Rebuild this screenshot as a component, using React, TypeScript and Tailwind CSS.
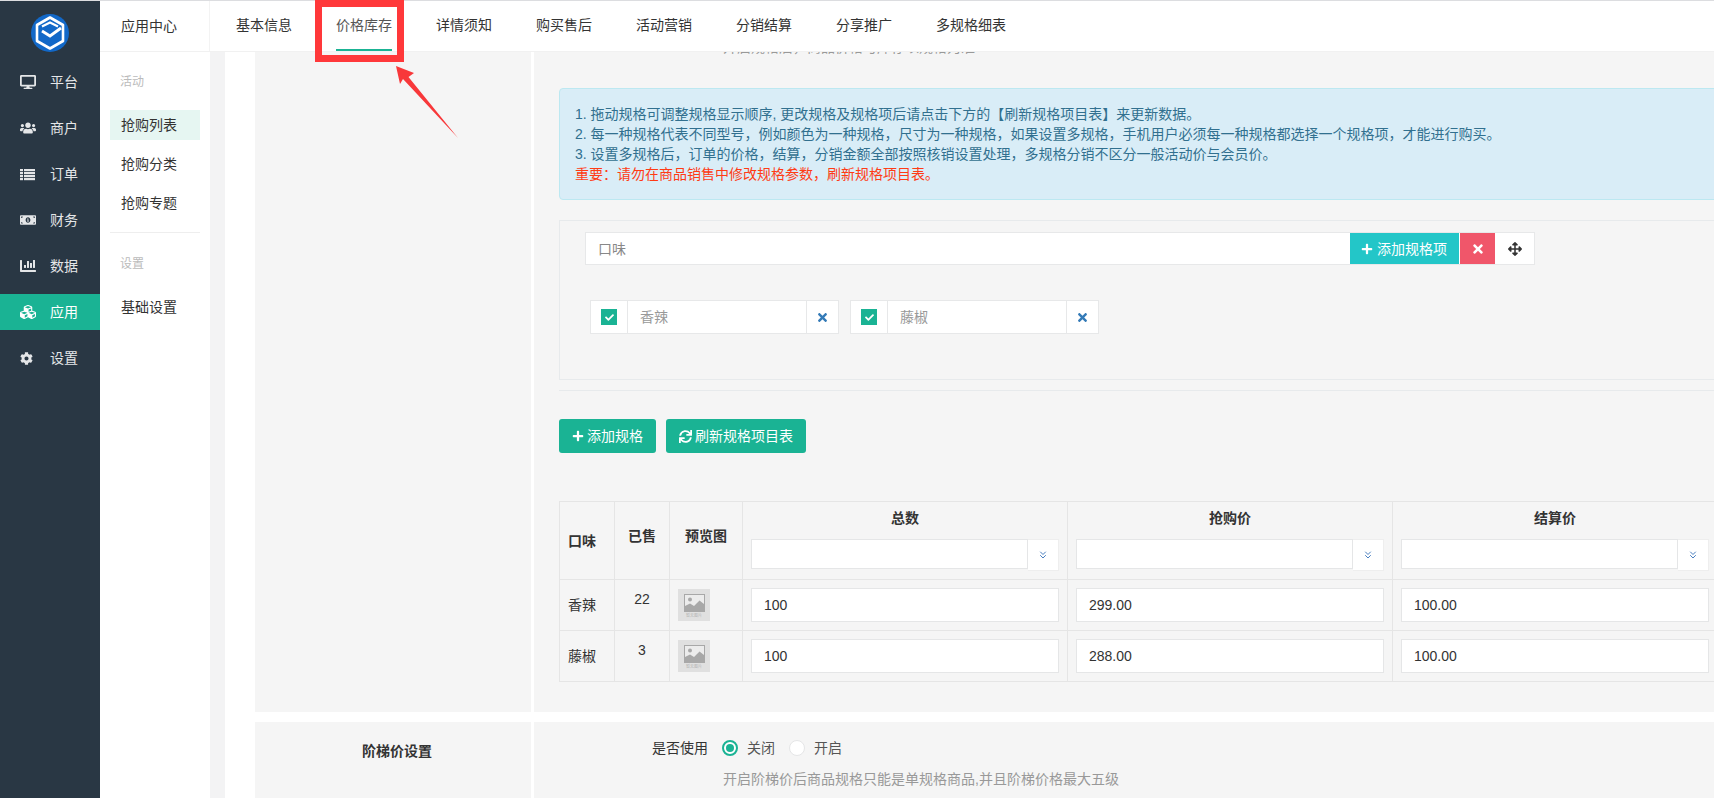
import {
  FaDesktop,
  FaUsers,
  FaMoneyBillAlt,
  FaChartBar,
  FaCubes,
  FaCog,
  FaPlus,
  FaSync,
  FaTimes,
  FaArrowsAlt,
  FaCheck,
} from 'react-icons/fa';
import { ChevronsDown } from 'lucide-react';

function ListIcon({ size }: { size: number }) {
  return (
    <svg width={size} height={size} viewBox="0 0 15 15" fill="currentColor">
      {[2, 5, 8, 11].map((y) => (
        <g key={y}>
          <rect x="0" y={y} width="3" height="2.2" />
          <rect x="4" y={y} width="11" height="2.2" />
        </g>
      ))}
    </svg>
  );
}

const NAV = [
  { label: '平台', icon: FaDesktop, size: 16 },
  { label: '商户', icon: FaUsers, size: 16 },
  { label: '订单', icon: ListIcon, size: 15 },
  { label: '财务', icon: FaMoneyBillAlt, size: 16 },
  { label: '数据', icon: FaChartBar, size: 16 },
  { label: '应用', icon: FaCubes, size: 16, active: true },
  { label: '设置', icon: FaCog, size: 13 },
];

const TABS = ['基本信息', '价格库存', '详情须知', '购买售后', '活动营销', '分销结算', '分享推广', '多规格细表'];

const ROWS = [
  { name: '香辣', sold: '22', total: '100', price: '299.00', settle: '100.00' },
  { name: '藤椒', sold: '3', total: '100', price: '288.00', settle: '100.00' },
];

function Logo() {
  return (
    <svg width="40" height="40" viewBox="0 0 40 40">
      <circle cx="20" cy="20" r="19" fill="#1268c8" />
      <path d="M20 4.5 L33 12 V28 L20 35.5 L7 28 V12 Z" fill="none" stroke="#fff" strokeWidth="2.6" strokeLinejoin="round" />
      <path d="M12 13.5 L20 9.5 L28 13.5" fill="none" stroke="#fff" strokeWidth="2.2" />
      <path d="M12 18 L20 23 L31 15" fill="none" stroke="#fff" strokeWidth="2.8" />
    </svg>
  );
}

function Thumb() {
  return (
    <div className="flex h-8 w-8 flex-col items-center bg-[#e0e0e0] pt-[5px]">
      <svg width="21" height="18" viewBox="0 0 21 18">
        <rect x="0.5" y="0.5" width="20" height="17" fill="#ececec" stroke="#a8a8a8" />
        <circle cx="6" cy="5.5" r="2" fill="#a8a8a8" />
        <path d="M1 17 V12 L6 9.5 L10 12 L15.5 6.5 L20 10 V17 Z" fill="#a8a8a8" />
      </svg>
      <span className="mt-[1px] text-[4px] leading-[5px] text-[#b5b5b5]">暂无图片</span>
    </div>
  );
}

function Tag({ name }: { name: string }) {
  return (
    <div className="flex h-[34px] border border-[#e7e8e9] bg-white">
      <div className="flex w-[37px] items-center justify-center border-r border-[#e7e8e9]">
        <span className="flex h-4 w-4 items-center justify-center bg-[#1ab394] text-white">
          <FaCheck size={9} />
        </span>
      </div>
      <div className="flex w-[178px] items-center pl-[12px] text-[#999]">{name}</div>
      <div className="flex w-[32px] items-center justify-center border-l border-[#e7e8e9] text-[#337ab7]">
        <FaTimes size={13} />
      </div>
    </div>
  );
}

function BatchField() {
  return (
    <div className="flex items-start">
      <div className="h-[30px] flex-1 border border-[#e5e6e7] bg-white" />
      <div className="flex h-[32px] w-[31px] items-center justify-center border border-l-0 border-[#eeeeee] bg-white text-[#4a7fc0]">
        <ChevronsDown size={12} strokeWidth={2} />
      </div>
    </div>
  );
}

function ValueField({ value }: { value: string }) {
  return (
    <div className="flex h-[34px] items-center border border-[#e5e6e7] bg-white pl-[12px] text-[#333]">{value}</div>
  );
}

const thClass = 'border border-[#e5e5e5] p-2 font-bold text-[#333]';
const tdClass = 'border border-[#e5e5e5] px-2';

export default function App() {
  return (
    <div
      className="relative flex h-[798px] w-[1714px] overflow-hidden bg-white text-sm text-[#333]"
      style={{ fontFamily: '"Liberation Sans", "Noto Sans CJK SC", sans-serif' }}
    >
      {/* 左侧主导航 */}
      <aside className="w-[100px] shrink-0 bg-[#293744] text-[#e4e6e8]">
        <div className="flex h-[64px] items-center justify-center pt-[2px]">
          <Logo />
        </div>
        {NAV.map(({ label, icon: Icon, size, active }) => (
          <div
            key={label}
            className={`mb-[10px] flex h-9 items-center pl-5 ${active ? 'bg-[#1ab394] text-white' : ''}`}
          >
            <span className="flex w-[30px] items-center">
              <Icon size={size} />
            </span>
            {label}
          </div>
        ))}
      </aside>

      <div className="flex min-w-0 flex-1 flex-col">
        {/* 顶部标签 */}
        <header className="flex h-[52px] shrink-0 border-b border-[#f1f1f1] bg-white">
          <div className="flex w-[110px] items-center border-r border-[#f3f3f3] pl-[21px]">应用中心</div>
          <nav className="flex pl-[4px]">
            {TABS.map((tab) => (
              <div key={tab} className="flex h-full items-center px-[22px]">
                <span
                  className={`flex h-full items-center border-b-2 ${
                    tab === '价格库存' ? 'border-[#1ab394] text-[#555]' : 'border-transparent'
                  }`}
                >
                  {tab}
                </span>
              </div>
            ))}
          </nav>
        </header>

        <div className="flex min-h-0 flex-1">
          {/* 二级导航 */}
          <div className="w-[110px] shrink-0 px-[10px] pt-[20px]">
            <div className="h-5 pl-[10px] text-xs leading-5 text-[#bbb]">活动</div>
            <div className="mt-[18px] mb-[9px] flex h-[30px] items-center bg-[#e6f6f2] pl-[11px]">抢购列表</div>
            <div className="mb-[9px] flex h-[30px] items-center pl-[11px]">抢购分类</div>
            <div className="flex h-[30px] items-center pl-[11px]">抢购专题</div>
            <div className="mt-[14px] h-px bg-[#eeeeee]" />
            <div className="mt-[21px] h-5 pl-[10px] text-xs leading-5 text-[#bbb]">设置</div>
            <div className="mt-[18px] flex h-[30px] items-center pl-[11px]">基础设置</div>
          </div>

          <div className="w-[15px] shrink-0 bg-[#f3f3f4]" />

          {/* 表单内容 */}
          <main className="min-w-0 flex-1 pl-[30px]">
            <div className="flex h-[660px]">
              <div className="w-[276px] shrink-0 bg-[#f5f5f5]" />
              <div className="ml-[3px] min-w-0 flex-1 overflow-hidden bg-[#f5f5f5] pl-[25px]">
                <div className="mt-[-15px] pl-[164px] text-[#999]">开启规格后，商品价格与库存以规格为准</div>

                <div className="w-[1200px]">
                  <div className="mt-[31px] h-[112px] rounded border border-[#bce8f1] bg-[#d9edf7] px-[15px] pt-[15px] leading-5 text-[#31708f]">
                    <p>1. 拖动规格可调整规格显示顺序, 更改规格及规格项后请点击下方的【刷新规格项目表】来更新数据。</p>
                    <p>2. 每一种规格代表不同型号，例如颜色为一种规格，尺寸为一种规格，如果设置多规格，手机用户必须每一种规格都选择一个规格项，才能进行购买。</p>
                    <p>3. 设置多规格后，订单的价格，结算，分销金额全部按照核销设置处理，多规格分销不区分一般活动价与会员价。</p>
                    <p className="text-[#ff3b14]">重要：请勿在商品销售中修改规格参数，刷新规格项目表。</p>
                  </div>

                  <div className="mt-[20px] h-[160px] border border-[#e7eaec] pt-[11px] pl-[25px]">
                    <div className="flex h-[33px] w-[950px] border border-[#e7e8e9] bg-white">
                      <div className="flex flex-1 items-center pl-3 text-[#888]">口味</div>
                      <div className="flex w-[109px] items-center gap-1 bg-[#23c6c8] pl-[11px] text-white">
                        <FaPlus size={12} />
                        添加规格项
                      </div>
                      <div className="ml-px flex w-[35px] items-center justify-center bg-[#f0566a] text-white">
                        <FaTimes size={14} />
                      </div>
                      <div className="flex w-[39px] items-center justify-center text-[#333]">
                        <FaArrowsAlt size={14} />
                      </div>
                    </div>
                    <div className="mt-[35px] flex gap-[11px] pl-[5px]">
                      <Tag name="香辣" />
                      <Tag name="藤椒" />
                    </div>
                  </div>

                  <div className="mt-[10px] h-px bg-[#e7eaec]" />

                  <div className="mt-[28px] flex gap-[10px] text-white">
                    <button className="flex h-[34px] w-[97px] items-center gap-[3px] rounded-[3px] bg-[#1ab394] pl-[13px]">
                      <FaPlus size={12} />
                      添加规格
                    </button>
                    <button className="flex h-[34px] w-[140px] items-center gap-[3px] rounded-[3px] bg-[#1ab394] pl-[13px]">
                      <FaSync size={13} />
                      刷新规格项目表
                    </button>
                  </div>

                  <table className="mt-[48px] w-[1158px] table-fixed border-collapse">
                    <colgroup>
                      <col className="w-[55px]" />
                      <col className="w-[55px]" />
                      <col className="w-[73px]" />
                      <col className="w-[325px]" />
                      <col className="w-[325px]" />
                      <col className="w-[325px]" />
                    </colgroup>
                    <thead>
                      <tr className="h-[78px]">
                        <th className={`${thClass} align-middle text-left`}>口味</th>
                        <th className={`${thClass} pb-[18px] align-middle`}>已售</th>
                        <th className={`${thClass} pb-[18px] align-middle`}>预览图</th>
                        {['总数', '抢购价', '结算价'].map((title) => (
                          <th key={title} className={`${thClass} pt-[6px] pb-0 align-top`}>
                            <div className="mb-[11px] h-5 leading-5">{title}</div>
                            <BatchField />
                          </th>
                        ))}
                      </tr>
                    </thead>
                    <tbody>
                      {ROWS.map((row) => (
                        <tr key={row.name} className="h-[51px]">
                          <td className={`${tdClass} align-middle`}>{row.name}</td>
                          <td className={`${tdClass} pt-[9px] text-center align-top`}>{row.sold}</td>
                          <td className={`${tdClass} pt-[9px] align-top`}>
                            <Thumb />
                          </td>
                          <td className={`${tdClass} pt-[8px] align-top`}>
                            <ValueField value={row.total} />
                          </td>
                          <td className={`${tdClass} pt-[8px] align-top`}>
                            <ValueField value={row.price} />
                          </td>
                          <td className={`${tdClass} pt-[8px] align-top`}>
                            <ValueField value={row.settle} />
                          </td>
                        </tr>
                      ))}
                    </tbody>
                  </table>
                </div>
              </div>
            </div>

            {/* 阶梯价设置 */}
            <div className="mt-[10px] flex h-[100px]">
              <div className="w-[276px] shrink-0 bg-[#f5f5f5] pt-[19px] pl-2 text-center font-bold">阶梯价设置</div>
              <div className="ml-[3px] flex-1 bg-[#f5f5f5] pt-[16px]">
                <div className="flex h-5 items-center pl-[118px]">
                  <span>是否使用</span>
                  <span className="ml-[14px] flex h-4 w-4 items-center justify-center rounded-full border-2 border-[#1ab394] bg-white">
                    <span className="h-2 w-2 rounded-full bg-[#1ab394]" />
                  </span>
                  <span className="ml-[9px] text-[#555]">关闭</span>
                  <span className="ml-[14px] h-4 w-4 rounded-full border border-[#e5e6e7] bg-white" />
                  <span className="ml-[9px] text-[#555]">开启</span>
                </div>
                <div className="mt-[11px] pl-[189px] text-[#999]">开启阶梯价后商品规格只能是单规格商品,并且阶梯价格最大五级</div>
              </div>
            </div>
          </main>
        </div>
      </div>

      {/* 顶部细线与截图上的红色标注 */}
      <div className="pointer-events-none absolute top-0 left-0 h-px w-full bg-[#dcdde0]" />
      <div className="pointer-events-none absolute top-0 left-[315px] h-[62px] w-[89px] border-[7px] border-[#ff383a]" />
      <svg className="pointer-events-none absolute top-0 left-0" width="500" height="160" viewBox="0 0 500 160">
        <path d="M396 66 L414 73 L408.5 77 L458 138 L403 79 L400 84 Z" fill="#f8383a" />
      </svg>
    </div>
  );
}
